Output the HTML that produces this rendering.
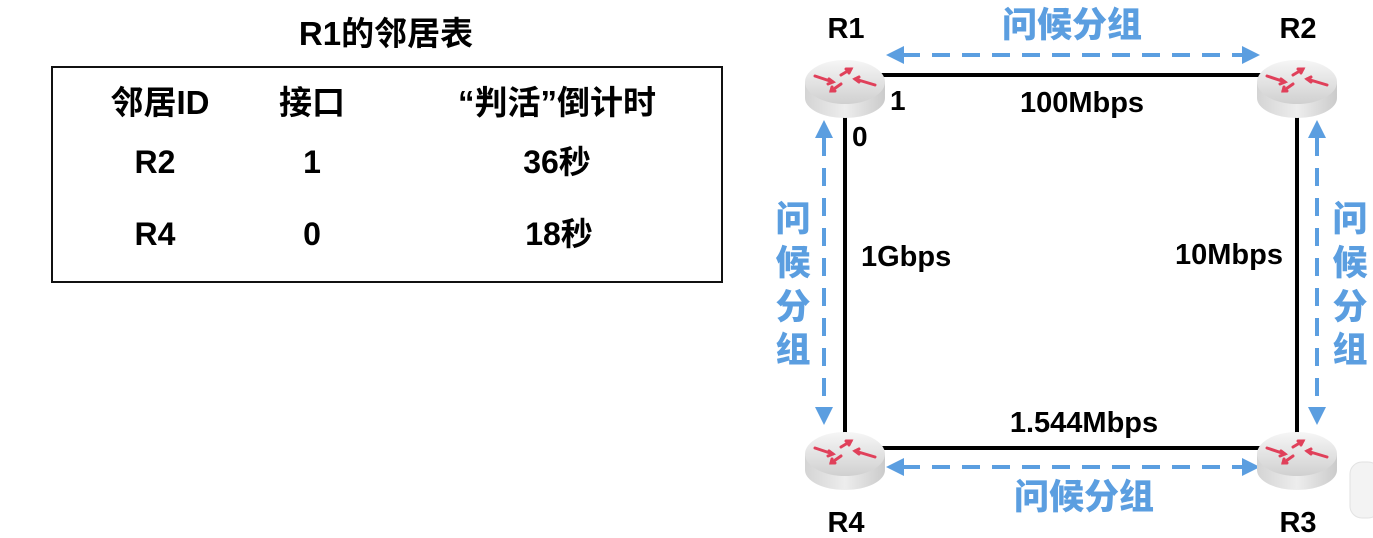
<!DOCTYPE html>
<html><head><meta charset="utf-8"><style>
html,body{margin:0;padding:0;background:#fff;}
svg{display:block}
text{font-family:"Liberation Sans","Noto Sans CJK SC",sans-serif;font-weight:bold;}
.b{fill:#5b9ee0;font-family:"Liberation Sans","Noto Sans CJK SC",sans-serif;font-weight:900;}
</style></head><body>
<svg width="1373" height="538" viewBox="0 0 1373 538" xmlns="http://www.w3.org/2000/svg">
<defs>
<linearGradient id="g" x1="0" y1="0" x2="0" y2="1"><stop offset="0" stop-color="#f6f6f6"/><stop offset="1" stop-color="#d0d0d0"/></linearGradient>
<linearGradient id="g2" x1="0" y1="0" x2="1" y2="0"><stop offset="0" stop-color="#d4d4d4"/><stop offset="0.5" stop-color="#ededed"/><stop offset="1" stop-color="#cbcbcb"/></linearGradient>
<g id="rt">
<path d="M-40,-6 L-40,10 A40,20 0 0 0 40,10 L40,-6 Z" fill="url(#g2)"/>
<ellipse cx="0" cy="-6" rx="40" ry="22" fill="url(#g)"/>
<g stroke="#e0405a" stroke-width="3" fill="none" stroke-linecap="round">
<path d="M-30,-12 L-12,-6"/><path d="M-16,-9 L-12,-6 L-17,-4"/>
<path d="M-4,-13 L6,-19"/><path d="M1,-19 L6,-19 L4,-15"/>
<path d="M30,-3 L10,-9"/><path d="M14,-11 L10,-9 L14,-6"/>
<path d="M-4,-4 L-14,3"/><path d="M-13,-1 L-14,3 L-10,3"/>
</g>
</g>
</defs>
<text x="386" y="45" font-size="33" text-anchor="middle">R1的邻居表</text>
<rect x="52" y="67" width="670" height="215" fill="none" stroke="#111" stroke-width="2"/>
<text x="160" y="114" font-size="33" text-anchor="middle">邻居ID</text>
<text x="312" y="114" font-size="33" text-anchor="middle">接口</text>
<text x="557" y="114" font-size="33" text-anchor="middle">“判活”倒计时</text>
<text x="155" y="173" font-size="32" text-anchor="middle">R2</text>
<text x="312" y="173" font-size="32" text-anchor="middle">1</text>
<text x="557" y="173" font-size="32" text-anchor="middle">36秒</text>
<text x="155" y="245" font-size="32" text-anchor="middle">R4</text>
<text x="312" y="245" font-size="32" text-anchor="middle">0</text>
<text x="559" y="245" font-size="32" text-anchor="middle">18秒</text>
<g stroke="#000" stroke-width="4">
<line x1="880" y1="75" x2="1262" y2="75"/>
<line x1="845" y1="100" x2="845" y2="436"/>
<line x1="1297" y1="100" x2="1297" y2="436"/>
<line x1="880" y1="448" x2="1262" y2="448"/>
</g>
<g stroke="#5b9ee0" stroke-width="4" stroke-dasharray="18,12" fill="none">
<line x1="902" y1="55" x2="1245" y2="55"/>
<line x1="902" y1="467" x2="1245" y2="467"/>
<line x1="824" y1="138" x2="824" y2="408"/>
<line x1="1317" y1="138" x2="1317" y2="408"/>
</g>
<g fill="#5b9ee0">
<path d="M886,55 L904,46 L904,64 Z"/><path d="M1260,55 L1242,46 L1242,64 Z"/>
<path d="M886,467 L904,458 L904,476 Z"/><path d="M1260,467 L1242,458 L1242,476 Z"/>
<path d="M824,120 L815,138 L833,138 Z"/><path d="M824,425 L815,407 L833,407 Z"/>
<path d="M1317,120 L1308,138 L1326,138 Z"/><path d="M1317,425 L1308,407 L1326,407 Z"/>
</g>
<use href="#rt" x="845" y="88"/>
<use href="#rt" x="1297" y="88"/>
<use href="#rt" x="845" y="460"/>
<use href="#rt" x="1297" y="460"/>
<text x="846" y="38" font-size="29" text-anchor="middle">R1</text>
<text x="1298" y="38" font-size="29" text-anchor="middle">R2</text>
<text x="846" y="532" font-size="29" text-anchor="middle">R4</text>
<text x="1298" y="532" font-size="29" text-anchor="middle">R3</text>
<text x="890" y="110" font-size="28">1</text>
<text x="852" y="146" font-size="28">0</text>
<text x="1082" y="112" font-size="29" text-anchor="middle">100Mbps</text>
<text x="1084" y="432" font-size="29" text-anchor="middle">1.544Mbps</text>
<text x="861" y="266" font-size="29">1Gbps</text>
<text x="1283" y="264" font-size="29" text-anchor="end">10Mbps</text>
<text class="b" x="1072" y="37" font-size="35" text-anchor="middle">问候分组</text>
<text class="b" x="1084" y="509" font-size="35" text-anchor="middle">问候分组</text>
<text class="b" x="793" y="231" font-size="35" text-anchor="middle">问</text><text class="b" x="793" y="275" font-size="35" text-anchor="middle">候</text><text class="b" x="793" y="319" font-size="35" text-anchor="middle">分</text><text class="b" x="793" y="362" font-size="35" text-anchor="middle">组</text>
<text class="b" x="1350" y="231" font-size="35" text-anchor="middle">问</text><text class="b" x="1350" y="275" font-size="35" text-anchor="middle">候</text><text class="b" x="1350" y="319" font-size="35" text-anchor="middle">分</text><text class="b" x="1350" y="362" font-size="35" text-anchor="middle">组</text>
<rect x="1350" y="462" width="30" height="56" rx="12" fill="#f3f3f3" stroke="#e2e2e2"/>
</svg>
</body></html>
